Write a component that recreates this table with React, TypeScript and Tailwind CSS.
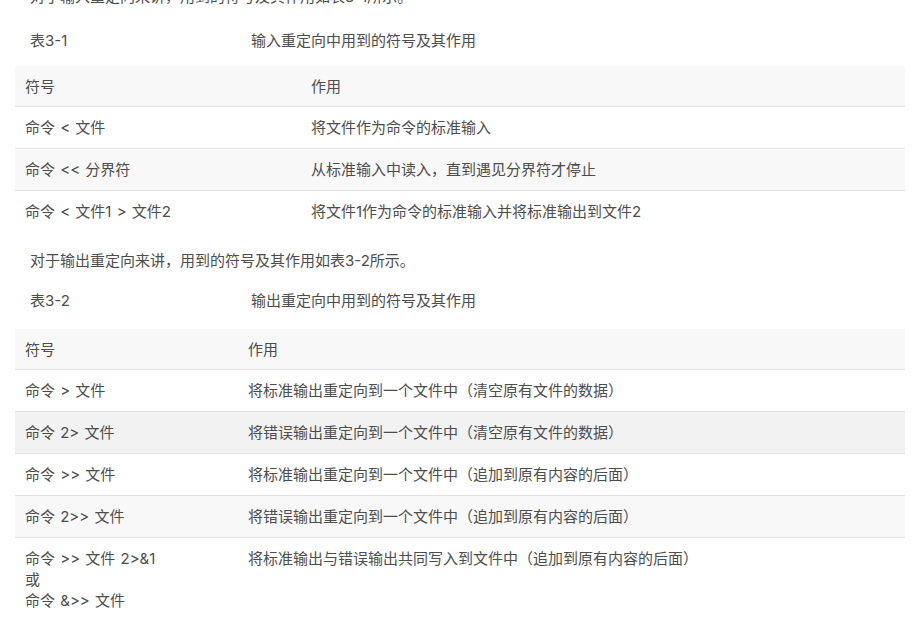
const font = "font-['Inter','Noto_Sans_CJK_SC',sans-serif]";

interface Row {
    sym: string[];
    desc: string;
    bg?: string;
}

const inputRows: Row[] = [
    { sym: ['命令 < 文件'], desc: '将文件作为命令的标准输入' },
    { sym: ['命令 << 分界符'], desc: '从标准输入中读入，直到遇见分界符才停止', bg: 'bg-[#f8f8f8]' },
    { sym: ['命令 < 文件1 > 文件2'], desc: '将文件1作为命令的标准输入并将标准输出到文件2' },
];

const outputRows: Row[] = [
    { sym: ['命令 > 文件'], desc: '将标准输出重定向到一个文件中（清空原有文件的数据）' },
    { sym: ['命令 2> 文件'], desc: '将错误输出重定向到一个文件中（清空原有文件的数据）', bg: 'bg-[#f2f2f2]' },
    { sym: ['命令 >> 文件'], desc: '将标准输出重定向到一个文件中（追加到原有内容的后面）' },
    { sym: ['命令 2>> 文件'], desc: '将错误输出重定向到一个文件中（追加到原有内容的后面）', bg: 'bg-[#f8f8f8]' },
    { sym: ['命令 >> 文件 2>&1', '或', '命令 &>> 文件'], desc: '将标准输出与错误输出共同写入到文件中（追加到原有内容的后面）' },
];

function RedirectTable({ rows, firstCol }: { rows: Row[]; firstCol: string }) {
    return (
        <div className="w-[890px]">
            <div className="flex bg-[#f8f8f8] border-b border-[#e3e3e3] h-[41px] items-center">
                <div className={`${firstCol} shrink-0 px-[10px]`}>符号</div>
                <div className="px-[10px]">作用</div>
            </div>
            {rows.map((r, i) => (
                <div
                    key={i}
                    className={`flex py-[10px] ${r.bg ?? 'bg-white'} ${i < rows.length - 1 ? 'border-b border-[#e3e3e3]' : ''}`}
                >
                    <div className={`${firstCol} shrink-0 px-[10px] whitespace-pre [word-spacing:1px]`}>
                        {r.sym.map((s, j) => (
                            <div key={j}>{s}</div>
                        ))}
                    </div>
                    <div className="px-[10px]">{r.desc}</div>
                </div>
            ))}
        </div>
    );
}

export default function App() {
    return (
        <div className={`${font} text-[15px] leading-[21px] text-[#4d4d4d] bg-white w-[913px] h-[637px] overflow-hidden`}>
            <div className="pl-[15px] -mt-[14px]">
                <p className="pl-[15px]">对于输入重定向来讲，用到的符号及其作用如表3-1所示。</p>
                <div className="flex pl-[15px] mt-[23px]">
                    <span className="w-[221px]">表3-1</span>
                    <span>输入重定向中用到的符号及其作用</span>
                </div>
                <div className="mt-[15px]">
                    <RedirectTable rows={inputRows} firstCol="w-[286px]" />
                </div>
                <p className="pl-[15px] mt-[18px]">对于输出重定向来讲，用到的符号及其作用如表3-2所示。</p>
                <div className="flex pl-[15px] mt-[19px]">
                    <span className="w-[221px]">表3-2</span>
                    <span>输出重定向中用到的符号及其作用</span>
                </div>
                <div className="mt-[18px]">
                    <RedirectTable rows={outputRows} firstCol="w-[223px]" />
                </div>
            </div>
        </div>
    );
}
